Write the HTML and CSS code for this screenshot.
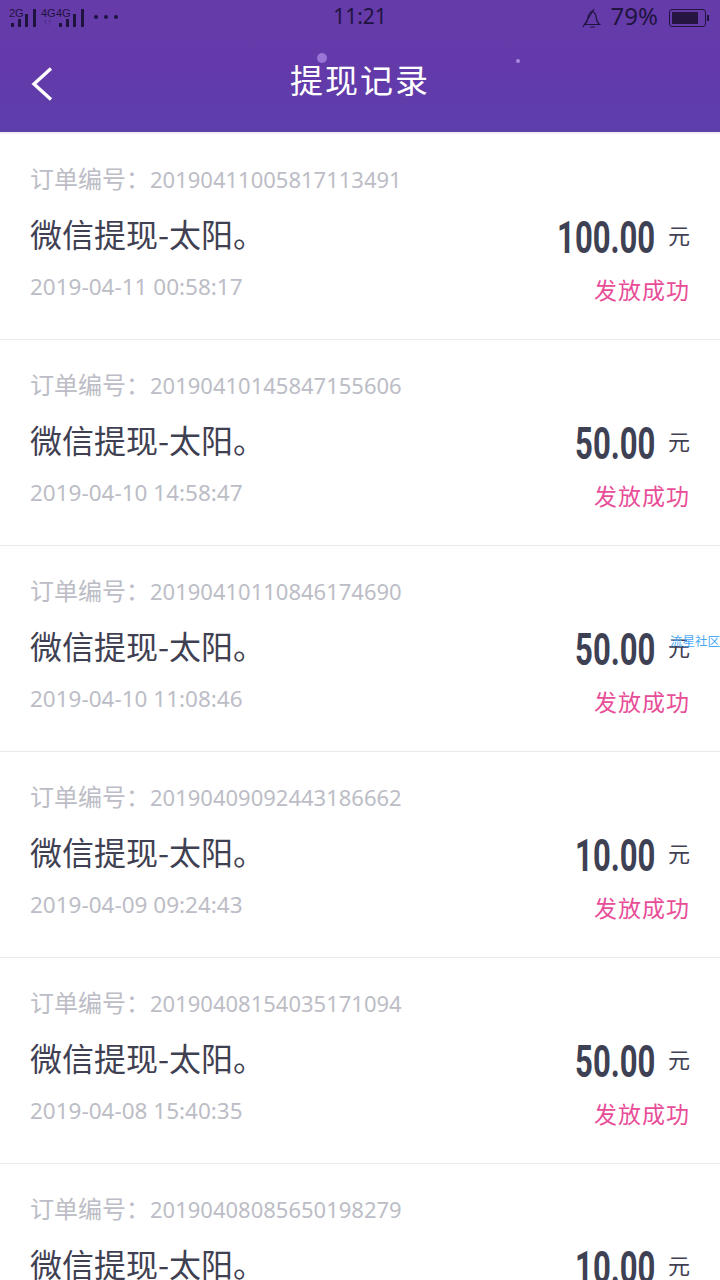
FILE: index.html
```html
<!DOCTYPE html>
<html lang="zh">
<head>
<meta charset="utf-8">
<title>提现记录</title>
<link rel="stylesheet" href="styles.css">
</head>
<body>
<div class="page">
  <header class="header">
    <span class="dot dot-a"></span>
    <span class="dot dot-b"></span>
    <div class="status">
      <div class="status-left">
        <span class="net"><span class="net-label">2G</span>
          <svg width="29" height="27" viewBox="0 0 29 27"><g fill="#1f1440"><rect x="1" y="23" width="3" height="4"/><rect x="8" y="19" width="3" height="8"/><rect x="15" y="14" width="3" height="13"/><rect x="23" y="9" width="3" height="18"/></g></svg>
        </span>
        <span class="net net-two"><span class="net-label">4G</span><span class="net-label net-label-b">4G</span><span class="arrows">↑↑</span>
          <svg width="29" height="27" viewBox="0 0 29 27"><g fill="#1f1440"><rect x="1" y="23" width="3" height="4"/><rect x="8" y="19" width="3" height="8"/><rect x="15" y="14" width="3" height="13"/><rect x="23" y="9" width="3" height="18"/></g></svg>
        </span>
        <span class="dots"><i></i><i></i><i></i></span>
      </div>
      <div class="clock">11:21</div>
      <div class="status-right">
        <svg class="bell" width="22" height="22" viewBox="0 0 22 22" fill="none" stroke="#1f1440" stroke-width="1.2"><path d="M4 17.500c1.500-1.500 2.500-3 2.800-6 .3-3.500 1.700-6 4.400-7.500 2.600 1.300 3.700 3.500 4 6.500.3 3.300 1.300 5.500 3.300 7z"/><path d="M3.500 17.500h15.500M9 20h5"/><path d="M2 20 13 2"/></svg>
        <span class="percent">79%</span>
        <span class="battery"><span class="battery-fill"></span></span><span class="battery-tip"></span>
      </div>
    </div>
    <div class="nav">
      <svg class="back" width="22" height="34" viewBox="0 0 22 34" fill="none" stroke="#fff" stroke-width="3.400"><path d="M20 1.500 3 17l17 15.500"/></svg>
      <h1 class="title">提现记录</h1>
    </div>
  </header>
  <main class="list">
    <article class="row">
      <div class="info">
        <p class="order">订单编号：<span class="num">20190411005817113491</span></p>
        <p class="name">微信提现-太阳。</p>
        <p class="date">2019-04-11 00:58:17</p>
      </div>
      <div class="side">
        <p class="money"><span class="amount">100.00</span><span class="unit">元</span></p>
        <p class="state">发放成功</p>
      </div>
    </article>
    <article class="row">
      <div class="info">
        <p class="order">订单编号：<span class="num">20190410145847155606</span></p>
        <p class="name">微信提现-太阳。</p>
        <p class="date">2019-04-10 14:58:47</p>
      </div>
      <div class="side">
        <p class="money"><span class="amount">50.00</span><span class="unit">元</span></p>
        <p class="state">发放成功</p>
      </div>
    </article>
    <article class="row">
      <div class="info">
        <p class="order">订单编号：<span class="num">20190410110846174690</span></p>
        <p class="name">微信提现-太阳。</p>
        <p class="date">2019-04-10 11:08:46</p>
      </div>
      <div class="side">
        <p class="money"><span class="amount">50.00</span><span class="unit">元</span></p>
        <p class="state">发放成功</p>
      </div>
      <span class="mark">流星社区</span>
    </article>
    <article class="row">
      <div class="info">
        <p class="order">订单编号：<span class="num">20190409092443186662</span></p>
        <p class="name">微信提现-太阳。</p>
        <p class="date">2019-04-09 09:24:43</p>
      </div>
      <div class="side">
        <p class="money"><span class="amount">10.00</span><span class="unit">元</span></p>
        <p class="state">发放成功</p>
      </div>
    </article>
    <article class="row">
      <div class="info">
        <p class="order">订单编号：<span class="num">20190408154035171094</span></p>
        <p class="name">微信提现-太阳。</p>
        <p class="date">2019-04-08 15:40:35</p>
      </div>
      <div class="side">
        <p class="money"><span class="amount">50.00</span><span class="unit">元</span></p>
        <p class="state">发放成功</p>
      </div>
    </article>
    <article class="row">
      <div class="info">
        <p class="order">订单编号：<span class="num">20190408085650198279</span></p>
        <p class="name">微信提现-太阳。</p>
        <p class="date">2019-04-08 08:56:50</p>
      </div>
      <div class="side">
        <p class="money"><span class="amount">10.00</span><span class="unit">元</span></p>
        <p class="state">发放成功</p>
      </div>
    </article>
  </main>
</div>
</body>
</html>
```
FILE: styles.css
```css
* { box-sizing: border-box; }
html, body { margin: 0; padding: 0; }
body { background: #fff; font-family: "Noto Sans CJK SC", "Noto Sans", sans-serif; }
p, h1 { margin: 0; font-weight: 400; }
.page { width: 720px; height: 1280px; overflow: hidden; }

.header { position: relative; height: 132px; background: linear-gradient(180deg, #663ba9 0%, #6439aa 50%, #5c3fab 100%); }
.dot { position: absolute; border-radius: 50%; }
.dot-a { left: 317px; top: 53px; width: 10px; height: 10px; background: #9a74d6; }
.dot-b { left: 516px; top: 59px; width: 4px; height: 4px; background: #a98be0; }

.status { height: 36px; display: flex; align-items: flex-start; justify-content: space-between; padding: 0 11px 0 10px; color: #1f1440; position: relative; }
.status-left { display: flex; align-items: flex-start; width: 230px; }
.net { position: relative; display: block; width: 32px; height: 27px; }
.net svg { display: block; }
.net-two { width: 41px; padding-left: 16px; }
.net-label { position: absolute; left: -1px; top: 7px; font: 11px/12px "Liberation Sans", sans-serif; }
.net-label-b { left: 14px; }
.arrows { position: absolute; left: 1px; top: 18px; font: 9px/9px "Liberation Sans", sans-serif; opacity: .55; }
.dots { display: flex; gap: 6px; margin: 15px 0 0 11px; }
.dots i { width: 4px; height: 4px; border-radius: 50%; background: #1f1440; }
.clock { position: absolute; left: 0; right: 0; top: 2px; text-align: center; font: 21px/28px "Noto Sans", sans-serif; }
.status-right { display: flex; align-items: center; height: 34px; }
.bell { margin-right: 8px; margin-top: 1px; }
.percent { font: 24px/28px "Noto Sans", sans-serif; margin: -3px 11px 0 0; }
.battery { width: 37px; height: 18px; border: 1px solid #1f1440; border-radius: 3px; padding: 2px; display: block; margin-top: 2px; }
.battery-fill { display: block; width: 26px; height: 12px; background: #261541; }
.battery-tip { width: 2px; height: 6px; margin: 2px 0 0 1px; background: #1f1440; }

.nav { height: 96px; display: flex; align-items: center; justify-content: center; position: relative; padding-bottom: 6px; }
.back { position: absolute; left: 31px; top: 31px; }
.title { color: #fff; font-size: 33px; line-height: 48px; letter-spacing: 2px; margin-top: -4px; }

.list { border-top: 2px solid #f1eff6; }
.row { position: relative; height: 206px; padding: 25px 30px 0 30px; border-bottom: 1px solid #e9e9ec; display: flex; justify-content: space-between; align-items: flex-start; }
.order { color: #bcbdc6; font-size: 24px; line-height: 38px; white-space: nowrap; }
.num { font-family: "Noto Sans", sans-serif; font-size: 22px; }
.name { color: #3f4152; font-size: 32px; line-height: 46px; margin-top: 12px; }
.date { color: #bcbdc6; font: 22.5px/36px "Noto Sans", sans-serif; margin-top: 13px; }
.side { display: flex; flex-direction: column; align-items: flex-end; padding-top: 52px; }
.money { display: flex; align-items: center; height: 54px; }
.amount { color: #3e4053; font: 700 45px/54px "Roboto", sans-serif; display: inline-block; transform: scaleX(.69); transform-origin: right center; }
.unit { color: #3f4152; font-size: 22px; line-height: 30px; margin-left: 13px; margin-top: -8px; }
.state { color: #e84d97; font-size: 23px; line-height: 34px; letter-spacing: 1px; margin-top: 7px; }
.mark { position: absolute; right: 0; top: 87px; color: #4aa8f5; font-size: 12.500px; line-height: 16px; }
```
